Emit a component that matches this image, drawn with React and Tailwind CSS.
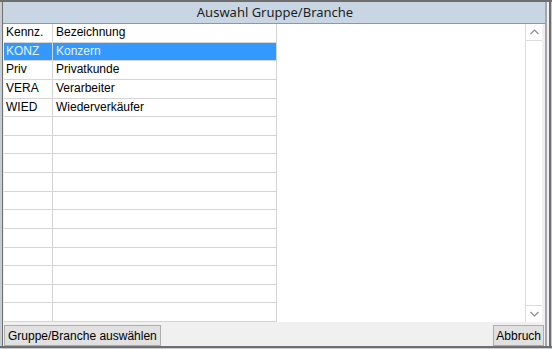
const rows = [
  { code: "KONZ", name: "Konzern", selected: true },
  { code: "Priv", name: "Privatkunde" },
  { code: "VERA", name: "Verarbeiter" },
  { code: "WIED", name: "Wiederverkäufer" },
];

const font = { fontFamily: '"Liberation Sans", Arial, sans-serif' };

function Row({ code, name, selected }) {
  return (
    <div
      className={
        "flex h-[18.67px] border-b border-[#d4d4d4] text-[12px] leading-[17px] " +
        (selected ? "bg-[#3399ff] text-[#e8f2ff]" : "text-black")
      }
    >
      <div className="w-[49px] border-r border-[#d4d4d4] pl-[2px] shrink-0">{code}</div>
      <div className="flex-1 pl-[3px]">{name}</div>
    </div>
  );
}

function Chevron({ up }) {
  return (
    <svg width="9" height="6" viewBox="0 0 9 6" className="block">
      <path
        d={up ? "M0.5 5 L4.5 1 L8.5 5" : "M0.5 1 L4.5 5 L8.5 1"}
        fill="none"
        stroke="#8a8a8a"
        strokeWidth="1.2"
      />
    </svg>
  );
}

export default function App() {
  const empty = Array(11).fill(null);

  return (
    <div className="w-[552px] h-[349px] bg-[#d9dee4] flex flex-col overflow-hidden" style={font}>
      <div className="h-[2px] bg-[#6e6e6e] shrink-0" />
      <div className="flex flex-1 min-h-0">
        <div className="w-[2px] bg-[#c7ccd2] shrink-0" />
        <div className="w-[1px] bg-[#707070] shrink-0" />
        <div className="flex-1 flex flex-col bg-[#f0f0f0] border-r-[2px] border-[#a6a6a6]">
          {/* title */}
          <div className="h-[22px] bg-[#c8d6e3] border-b border-[#8e98a3] flex items-center justify-center shrink-0 pl-[2px]">
            <span className="text-[13px] text-[#1e1e1e]" style={{ fontFamily: '"Noto Sans", sans-serif' }}>
              Auswahl Gruppe/Branche
            </span>
          </div>

          {/* body */}
          <div className="flex h-[298px] shrink-0 pl-[1px]">
            <div className="w-[273px] bg-white border-r border-[#d4d4d4] flex flex-col">
              <div className="flex h-[18.67px] border-b border-[#d4d4d4] text-[12px] leading-[17px] text-black">
                <div className="w-[49px] border-r border-[#d4d4d4] pl-[2px] shrink-0">Kennz.</div>
                <div className="flex-1 pl-[3px]">Bezeichnung</div>
              </div>
              {rows.map((r) => (
                <Row key={r.code} {...r} />
              ))}
              {empty.map((_, i) => (
                <Row key={i} code="" name="" />
              ))}
            </div>
            <div className="flex-1 bg-white" />
            <div className="w-[17px] bg-white border-l border-[#dcdcdc] flex flex-col justify-between">
              <div className="h-[17px] border-b border-[#dcdcdc] flex items-center justify-center">
                <Chevron up />
              </div>
              <div className="h-[17px] border-t border-[#dcdcdc] flex items-center justify-center">
                <Chevron />
              </div>
            </div>
            <div className="w-[3px] bg-[#f0f0f0]" />
          </div>

          {/* buttons */}
          <div className="flex justify-between items-start pt-[3px] pl-[1px] pr-[1px] text-[12px]">
            <button className="h-[21px] px-[3px] bg-[#e1e1e1] border border-[#adadad] leading-[18px] text-black">
              Gruppe/Branche auswählen
            </button>
            <button className="h-[21px] px-[2px] bg-[#e1e1e1] border border-[#adadad] leading-[18px] text-black">
              Abbruch
            </button>
          </div>
        </div>
        <div className="w-[2px] bg-[#f0f0f0] shrink-0" />
        <div className="w-[2px] bg-[#6e6e6e] shrink-0" />
        <div className="w-[1px] bg-[#c7ccd2] shrink-0" />
      </div>
      <div className="h-[2px] bg-[#6e6e6e] shrink-0" />
      <div className="h-[1px] bg-[#c7ccd2] shrink-0" />
    </div>
  );
}
